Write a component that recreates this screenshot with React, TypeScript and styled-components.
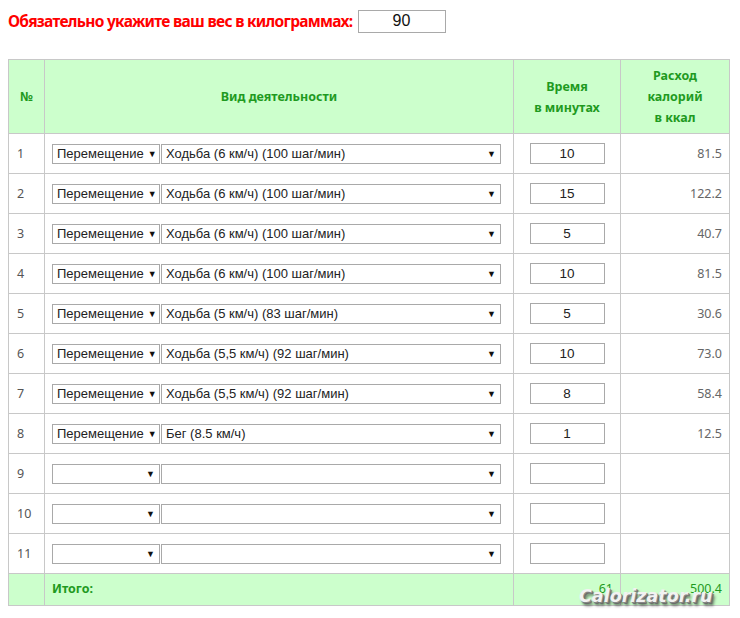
import React from "react";
import styled, { createGlobalStyle } from "styled-components";

const Global = createGlobalStyle`
  html, body { margin: 0; padding: 0; background: #fff; }
  body { font-family: "Noto Sans", "DejaVu Sans", sans-serif; }
`;

const Page = styled.div`
  position: relative;
  width: 740px;
  height: 618px;
  padding: 9px 8px 0 8px;
  box-sizing: border-box;
`;

const WeightRow = styled.div`
  display: flex;
  align-items: center;
  gap: 5px;
  height: 24px;
`;

const WeightLabel = styled.span`
  color: #ff0000;
  font-weight: bold;
  font-size: 15.5px;
  letter-spacing: -0.7px;
`;

const WeightBox = styled.div`
  width: 86px;
  height: 21px;
  border: 1px solid #a9a9a9;
  display: flex;
  align-items: center;
  justify-content: center;
  font-family: "Liberation Sans", Arial, sans-serif;
  font-size: 16px;
  color: #111;
`;

const Table = styled.table`
  margin-top: 26px;
  border-collapse: collapse;
  table-layout: fixed;
  border: 1px solid #c8c8c8;
`;

const HeadCell = styled.th<{ $w: number }>`
  width: ${(p) => p.$w}px;
  background: #ccffcc;
  color: #1f9a1f;
  font-size: 12.5px;
  font-weight: bold;
  line-height: 21px;
  height: 73px;
  padding: 0;
  border: 1px solid #c8c8c8;
  text-align: center;
  vertical-align: middle;
`;

const Row = styled.tr`
  height: 40px;
`;

const Cell = styled.td<{ $align?: string }>`
  border: 1px solid #c8c8c8;
  padding: 0 7px;
  text-align: ${(p) => p.$align || "left"};
  vertical-align: middle;
  font-size: 12.5px;
  color: #666;
`;

const NumCell = styled(Cell)`
  padding-left: 8px;
  color: #555;
`;

const ActivityCell = styled(Cell)`
  padding-left: 7px;
  padding-right: 12px;
`;

const SelectGroup = styled.div`
  display: flex;
  gap: 1px;
`;

const SelectBox = styled.div<{ $w?: number }>`
  box-sizing: border-box;
  width: ${(p) => (p.$w ? `${p.$w}px` : "auto")};
  flex: ${(p) => (p.$w ? "none" : "1")};
  height: 20px;
  border: 1px solid #a9a9a9;
  background: #fff;
  display: flex;
  align-items: center;
  padding: 0 4px 0 4px;
  font-family: "Liberation Sans", Arial, sans-serif;
  font-size: 13px;
  color: #222;
  white-space: nowrap;
  overflow: hidden;
`;

const SelectText = styled.span`
  flex: 1;
`;

const Arrow = styled.span`
  font-size: 9px;
  color: #111;
  margin-left: 4px;
`;

const TimeBox = styled.div`
  box-sizing: border-box;
  margin: 0 auto;
  width: 75px;
  height: 21px;
  border: 1px solid #a9a9a9;
  display: flex;
  align-items: center;
  justify-content: center;
  font-family: "Liberation Sans", Arial, sans-serif;
  font-size: 13.5px;
  color: #222;
`;

const FootRow = styled.tr`
  height: 32px;
  background: #ccffcc;
`;

const FootCell = styled.td<{ $align?: string }>`
  border: 1px solid #c8c8c8;
  padding: 0 7px 2px 7px;
  text-align: ${(p) => p.$align || "left"};
  color: #1f9a1f;
  font-size: 12.5px;
  vertical-align: middle;
`;

const FootLabel = styled.span`
  font-weight: bold;
`;

const Watermark = styled.div`
  position: absolute;
  left: 579px;
  top: 586px;
  font-family: "DejaVu Sans", sans-serif;
  font-weight: bold;
  font-style: italic;
  font-size: 17.5px;
  color: #f2f2f2;
  pointer-events: none;
  text-shadow: 1px 1px 0 #888, 2px 2px 1px #666, 3px 4px 3px rgba(0, 0, 0, 0.5);
`;

type R = { n: number; cat: string; act: string; min: string; kcal: string };

const rows: R[] = [
  { n: 1, cat: "Перемещение", act: "Ходьба (6 км/ч) (100 шаг/мин)", min: "10", kcal: "81.5" },
  { n: 2, cat: "Перемещение", act: "Ходьба (6 км/ч) (100 шаг/мин)", min: "15", kcal: "122.2" },
  { n: 3, cat: "Перемещение", act: "Ходьба (6 км/ч) (100 шаг/мин)", min: "5", kcal: "40.7" },
  { n: 4, cat: "Перемещение", act: "Ходьба (6 км/ч) (100 шаг/мин)", min: "10", kcal: "81.5" },
  { n: 5, cat: "Перемещение", act: "Ходьба (5 км/ч) (83 шаг/мин)", min: "5", kcal: "30.6" },
  { n: 6, cat: "Перемещение", act: "Ходьба (5,5 км/ч) (92 шаг/мин)", min: "10", kcal: "73.0" },
  { n: 7, cat: "Перемещение", act: "Ходьба (5,5 км/ч) (92 шаг/мин)", min: "8", kcal: "58.4" },
  { n: 8, cat: "Перемещение", act: "Бег (8.5 км/ч)", min: "1", kcal: "12.5" },
  { n: 9, cat: "", act: "", min: "", kcal: "" },
  { n: 10, cat: "", act: "", min: "", kcal: "" },
  { n: 11, cat: "", act: "", min: "", kcal: "" },
];

export default function App() {
  return (
    <Page>
      <Global />
      <WeightRow>
        <WeightLabel>Обязательно укажите ваш вес в килограммах:</WeightLabel>
        <WeightBox>90</WeightBox>
      </WeightRow>
      <Table>
        <thead>
          <tr>
            <HeadCell $w={35}>№</HeadCell>
            <HeadCell $w={468}>Вид деятельности</HeadCell>
            <HeadCell $w={106}>
              Время
              <br />в минутах
            </HeadCell>
            <HeadCell $w={108}>
              Расход
              <br />
              калорий
              <br />в ккал
            </HeadCell>
          </tr>
        </thead>
        <tbody>
          {rows.map((r) => (
            <Row key={r.n}>
              <NumCell>{r.n}</NumCell>
              <ActivityCell>
                <SelectGroup>
                  <SelectBox $w={108}>
                    <SelectText>{r.cat}</SelectText>
                    <Arrow>▼</Arrow>
                  </SelectBox>
                  <SelectBox>
                    <SelectText>{r.act}</SelectText>
                    <Arrow>▼</Arrow>
                  </SelectBox>
                </SelectGroup>
              </ActivityCell>
              <Cell $align="center">
                <TimeBox>{r.min}</TimeBox>
              </Cell>
              <Cell $align="right">{r.kcal}</Cell>
            </Row>
          ))}
          <FootRow>
            <FootCell />
            <FootCell>
              <FootLabel>Итого:</FootLabel>
            </FootCell>
            <FootCell $align="right">61</FootCell>
            <FootCell $align="right">500.4</FootCell>
          </FootRow>
        </tbody>
      </Table>
      <Watermark>Calorizator.ru</Watermark>
    </Page>
  );
}
